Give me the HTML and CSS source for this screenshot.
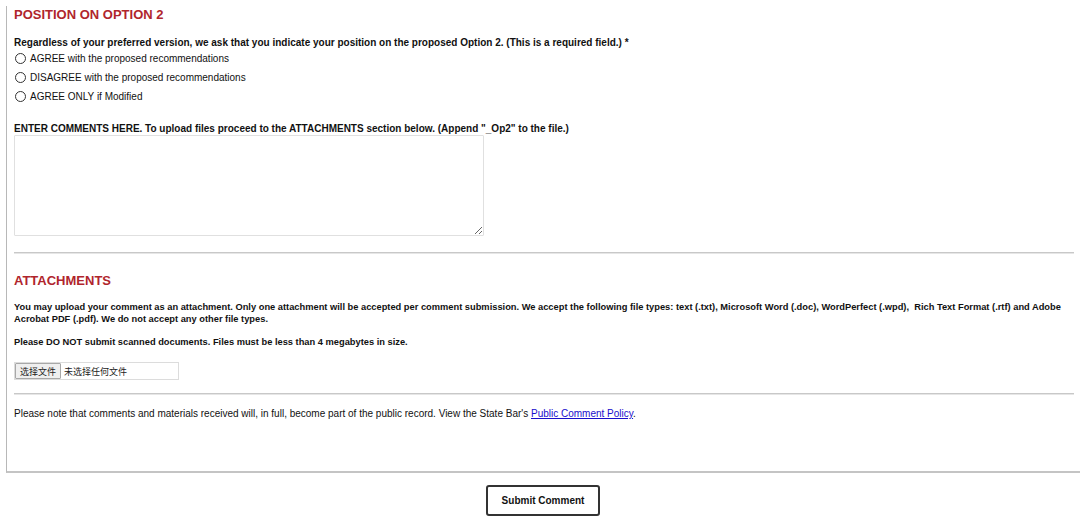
FILE: index.html
```html
<!DOCTYPE html>
<html>
<head>
<meta charset="utf-8">
<link rel="stylesheet" href="styles.css">
</head>
<body>
<div class="frame">
  <h2 class="section-title first">POSITION ON OPTION 2</h2>
  <p class="question">Regardless of your preferred version, we ask that you indicate your position on the proposed Option 2. (This is a required field.) *</p>
  <div class="radios">
    <label class="radio-row"><input type="radio" name="op2" class="radio"><span>AGREE with the proposed recommendations</span></label>
    <label class="radio-row"><input type="radio" name="op2" class="radio"><span>DISAGREE with the proposed recommendations</span></label>
    <label class="radio-row"><input type="radio" name="op2" class="radio"><span>AGREE ONLY if Modified</span></label>
  </div>
  <p class="comments-label">ENTER COMMENTS HERE. To upload files proceed to the ATTACHMENTS section below. (Append "_Op2" to the file.)</p>
  <textarea class="comments"></textarea>
  <hr class="divider first-divider">
  <h2 class="section-title">ATTACHMENTS</h2>
  <p class="attach-text">You may upload your comment as an attachment. Only one attachment will be accepted per comment submission. We accept the following file types: text (.txt), Microsoft Word (.doc), WordPerfect (.wpd),&nbsp; Rich Text Format (.rtf) and Adobe Acrobat PDF (.pdf). We do not accept any other file types.</p>
  <p class="attach-text warn">Please DO NOT submit scanned documents. Files must be less than 4 megabytes in size.</p>
  <div class="file-input">
    <span class="file-btn">选择文件</span>
    <span class="file-name">未选择任何文件</span>
  </div>
  <hr class="divider second-divider">
  <p class="note">Please note that comments and materials received will, in full, become part of the public record. View the State Bar's <a href="#" class="link">Public Comment Policy</a>.</p>
</div>
<div class="footer">
  <button class="submit" type="button">Submit Comment</button>
</div>
</body>
</html>
```

FILE: styles.css
```css
html, body {
  margin: 0;
  padding: 0;
  background: #ffffff;
  overflow: hidden;
}
body {
  font-family: "Liberation Sans", Arial, sans-serif;
  color: #111;
  width: 1080px;
}
.frame {
  margin-left: 6px;
  border-left: 1px solid #b8b8b8;
  border-bottom: 2px solid #c4c4c4;
  padding: 0 0 50px 7px;
  width: 1070px;
}
.section-title {
  margin: 18px 0 0 0;
  font-size: 13px;
  line-height: 18px;
  font-weight: bold;
  color: #b0252c;
}
.section-title.first {
  margin-top: 6px;
}
.question {
  margin: 13px 0 0 0;
  font-size: 10px;
  line-height: 12px;
  font-weight: bold;
}
.radios {
  display: flex;
  flex-direction: column;
}
.radio-row {
  display: flex;
  align-items: center;
  height: 19px;
  font-size: 10px;
  gap: 4px;
  padding-left: 1px;
}
.radio {
  appearance: none;
  -webkit-appearance: none;
  margin: 0;
  width: 11px;
  height: 11px;
  border: 1px solid #333;
  border-radius: 50%;
  background: #fff;
  box-sizing: border-box;
}
.comments-label {
  margin: 16px 0 0 0;
  font-size: 10px;
  line-height: 13px;
  font-weight: bold;
}
.comments {
  display: block;
  box-sizing: border-box;
  width: 470px;
  height: 101px;
  margin: 0;
  border: 1px solid #e0e0e0;
  border-radius: 1px;
  resize: vertical;
}
.divider {
  margin: 0;
  border: 0;
  border-top: 1px solid #c8c8c8;
  border-bottom: 1px solid #e6e6e6;
  width: 1060px;
}
.first-divider {
  margin-top: 16px;
}
.attach-text {
  margin: 11px 0 0 0;
  font-size: 9.3px;
  line-height: 12px;
  font-weight: bold;
}
.attach-text.warn {
  margin-top: 11px;
}
.file-input {
  margin-top: 14px;
  display: flex;
  align-items: stretch;
  width: 165px;
  height: 18px;
  box-sizing: border-box;
  border: 1px solid #dcdcdc;
  font-family: "Noto Sans CJK SC", sans-serif;
  font-size: 9px;
}
.file-btn {
  display: flex;
  align-items: center;
  padding: 0 4px;
  background: #efefef;
  border: 1px solid #a8a8a8;
  border-radius: 1px;
  color: #222;
}
.file-name {
  display: flex;
  align-items: center;
  padding-left: 3px;
  color: #222;
}
.second-divider {
  margin-top: 13px;
}
.note {
  margin: 12px 0 0 0;
  font-size: 10px;
  line-height: 14px;
}
.link {
  color: #1a0dcc;
  text-decoration: underline;
}
.footer {
  padding-left: 6px;
  display: flex;
  justify-content: center;
  padding-top: 12px;
}
.submit {
  width: 114px;
  height: 31px;
  background: #fff;
  border: 2px solid #333;
  border-radius: 3px;
  font-family: "Liberation Sans", Arial, sans-serif;
  font-size: 10px;
  font-weight: bold;
  color: #111;
}
```
